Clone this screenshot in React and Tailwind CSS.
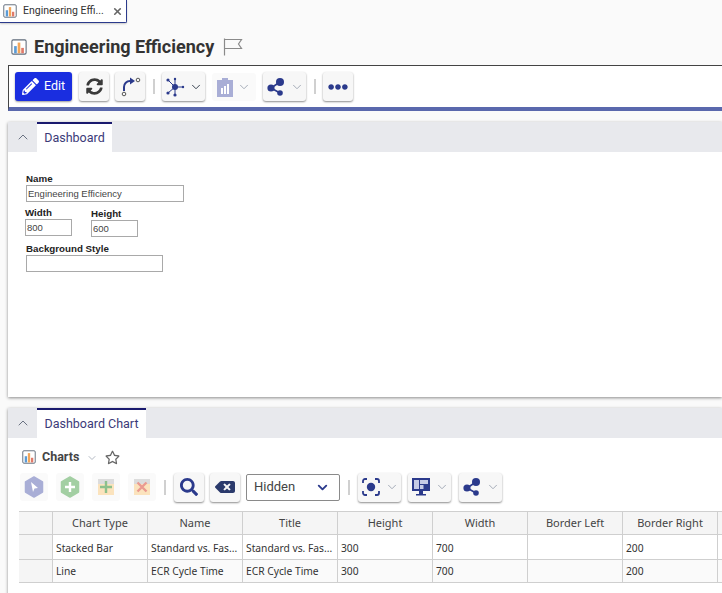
import { ChevronUp, ChevronDown, X } from 'lucide-react'
import { FaPencilAlt, FaSyncAlt, FaSearch, FaBackspace, FaEllipsisH, FaRegStar } from 'react-icons/fa'

const NAVY = '#2b3a8c'

const ChartIcon = ({ size = 18 }) => (
  <svg width={size} height={size} viewBox="0 0 18 18">
    <rect x="1" y="1" width="16" height="16" rx="1.5" fill="#fff" stroke="#5f6b7a" strokeWidth="1.2" />
    <rect x="3.5" y="8" width="3" height="8" fill="#5b9bd5" />
    <rect x="7.5" y="4" width="3" height="12" fill="#f2a65a" />
    <rect x="11.5" y="10" width="3" height="6" fill="#e07a6a" />
  </svg>
)

const FlagIcon = () => (
  <svg width="20" height="18" viewBox="0 0 20 18" fill="none" stroke="#8a8a8a" strokeWidth="1.2">
    <path d="M1.5 0.5 V17.5" />
    <path d="M1.5 1.5 H18.5 L15.5 6 L18.5 10.5 H1.5" />
  </svg>
)

const ShareIcon = () => (
  <svg width="20" height="20" viewBox="0 0 20 20" fill={NAVY}>
    <path d="M5 11 L14 5 M5 11 L14 16" stroke={NAVY} strokeWidth="1.6" />
    <circle cx="14" cy="5" r="4" />
    <circle cx="5" cy="11" r="3.6" />
    <circle cx="14" cy="16" r="2.8" />
  </svg>
)

const NetworkIcon = () => (
  <svg width="20" height="20" viewBox="0 0 20 20" fill={NAVY}>
    <path d="M10 10 L3 3 M10 10 L3 16 M10 10 L10 18 M10 10 L10 2 M10 10 L18 10" stroke={NAVY} strokeWidth="1" />
    <circle cx="10" cy="10" r="3" />
    <circle cx="3" cy="3" r="1.6" />
    <circle cx="3" cy="16" r="1.6" />
    <circle cx="10" cy="18" r="1.6" />
    <circle cx="10" cy="2" r="1.2" />
    <circle cx="18" cy="10" r="1.2" />
  </svg>
)

const RouteIcon = () => (
  <svg width="22" height="22" viewBox="0 0 22 22" fill="none">
    <path d="M5 15 V11 a6 6 0 0 1 6-6 h1" stroke={NAVY} strokeWidth="2" />
    <path d="M11 1.5 L16 5 L11 8.5 Z" fill={NAVY} />
    <circle cx="19" cy="4" r="1.8" stroke="#555" strokeWidth="1" />
    <circle cx="5" cy="18" r="1.8" stroke="#555" strokeWidth="1" />
  </svg>
)

const ClipboardIcon = () => (
  <svg width="16" height="20" viewBox="0 0 16 20" fill="#a9aed6">
    <path d="M0 3h5V1h6v2h5v17H0z" />
    <rect x="4" y="11" width="2" height="6" fill="#fff" />
    <rect x="7" y="9" width="2" height="8" fill="#fff" />
    <rect x="10" y="7" width="2" height="10" fill="#fff" />
  </svg>
)

const HexIcon = ({ fill, children }) => (
  <svg width="20" height="22" viewBox="0 0 20 22">
    <path d="M10 1 L18.5 6 V16 L10 21 L1.5 16 V6 Z" fill={fill} strokeLinejoin="round" stroke={fill} strokeWidth="1.5" />
    {children}
  </svg>
)

const GridEditIcon = ({ color }) => (
  <svg width="18" height="18" viewBox="0 0 18 18">
    <rect x="1" y="1" width="16" height="5" fill="#dcdcdc" />
    <rect x="1" y="6" width="16" height="11" fill="#fbe3bd" />
    {color === 'green' ? (
      <path d="M9 3 V15 M3 9 H15" stroke="#8cc08c" strokeWidth="2.4" />
    ) : (
      <path d="M4.5 4.5 L13.5 13.5 M13.5 4.5 L4.5 13.5" stroke="#ea9a90" strokeWidth="2.4" />
    )}
  </svg>
)

const TargetIcon = () => (
  <svg width="20" height="20" viewBox="0 0 20 20" fill="none" stroke={NAVY} strokeWidth="1.8">
    <path d="M2 6 V4 a2 2 0 0 1 2-2 h2 M14 2 h2 a2 2 0 0 1 2 2 v2 M18 14 v2 a2 2 0 0 1-2 2 h-2 M6 18 H4 a2 2 0 0 1-2-2 v-2" />
    <circle cx="10" cy="10" r="4.2" fill={NAVY} stroke="none" />
  </svg>
)

const MonitorIcon = () => (
  <svg width="20" height="20" viewBox="0 0 20 20" fill={NAVY}>
    <path d="M1 1h18v13H1z" />
    <rect x="3" y="3" width="5" height="9" fill="#c5cae6" />
    <rect x="9" y="3" width="8" height="4" fill="#c5cae6" />
    <rect x="9" y="8" width="3.5" height="4" fill="#c5cae6" />
    <path d="M8 14h4v3h3v1.5H5V17h3z" />
  </svg>
)

const IconBtn = ({ children, className = 'w-[30px]' }) => (
  <button className={`h-[29px] ${className} flex items-center justify-center gap-1 bg-[#f7f7f7] rounded-[3px] shadow-[0_1px_2px_rgba(0,0,0,0.45)]`}>
    {children}
  </button>
)

const Caret = ({ light }) => (
  <ChevronDown className={`w-3.5 h-3.5 ${light ? 'text-gray-400' : 'text-gray-800'}`} strokeWidth={1.5} />
)

const Sep = ({ className = '' }) => <div className={`w-[2px] h-[15px] bg-[#d0d0d0] ${className}`} />

const Ghost = ({ children, className = 'w-[28px]' }) => (
  <div className={`h-[28px] ${className} flex items-center justify-center gap-1 bg-[#fafafa] rounded-[3px]`}>{children}</div>
)

function PanelHeader({ label, width }) {
  return (
    <div className="h-[30px] bg-[#e8e9ed] flex">
      <div className="w-[29px] flex items-center justify-center">
        <ChevronUp className="w-4 h-4 text-gray-500" strokeWidth={1.5} />
      </div>
      <div className={`${width} bg-white border-t-2 border-[#1a1a6e] flex items-center justify-center text-[12.5px] text-[#3b3a78]`}>
        {label}
      </div>
    </div>
  )
}

const columns = ['Chart Type', 'Name', 'Title', 'Height', 'Width', 'Border Left', 'Border Right', '']
const rows = [
  ['Stacked Bar', 'Standard vs. Fas...', 'Standard vs. Fas...', '300', '700', '', '200', ''],
  ['Line', 'ECR Cycle Time', 'ECR Cycle Time', '300', '700', '', '200', ''],
]
const colWidths = ['w-[95px]', 'w-[95px]', 'w-[95px]', 'w-[95px]', 'w-[95px]', 'w-[95px]', 'w-[95px]', 'w-[40px]']

function Field({ label, className, inputClass, value }) {
  return (
    <div className={className}>
      <div className="text-[9.75px] leading-[12px] font-bold text-[#222]">{label}</div>
      <div className={`${inputClass} h-[17px] border border-[#a9a9a9] bg-white px-[1px] text-[9.5px] leading-[15px] text-[#444]`}>{value}</div>
    </div>
  )
}

export default function App() {
  return (
    <div className="w-[722px] h-[593px] overflow-hidden bg-[#fafafa] font-['Roboto',sans-serif]">
      {/* Document tab */}
      <div className="w-[127px] h-[23px] bg-white border-b border-r border-[#2b3a8c] rounded-br-[2px] shadow-[0_1px_2px_rgba(0,0,0,0.2)] flex items-center pl-[3px]">
        <ChartIcon size={14} />
        <span className="ml-[6px] text-[10.5px] text-[#333] whitespace-nowrap">Engineering Effi...</span>
        <X className="ml-[8px] w-[11px] h-[11px] text-[#666]" strokeWidth={3.5} />
      </div>

      {/* Title */}
      <div className="h-[42px] pl-[11px] pt-[6px] flex items-center gap-[7px]">
        <ChartIcon size={16} />
        <h1 className="text-[18px] font-bold text-[#333] leading-none">Engineering Efficiency</h1>
        <div className="ml-[2px]"><FlagIcon /></div>
      </div>

      {/* Main toolbar */}
      <div className="ml-2 h-[46px] bg-white border-t border-l border-[#444] border-b-[4px] border-b-[#5a68ad] flex items-center pl-[6px]">
        <button className="w-[57px] h-[29px] rounded-[3px] bg-[#1a2ee0] text-white flex items-center justify-center gap-[5px] text-[12.5px] shadow-[0_1px_2px_rgba(0,0,0,0.4)]">
          <FaPencilAlt className="w-[17px] h-[17px]" />
          Edit
        </button>
        <div className="ml-[7px]"><IconBtn><FaSyncAlt className="w-[17px] h-[17px] text-[#3a3a3a]" /></IconBtn></div>
        <div className="ml-[6px]"><IconBtn><RouteIcon /></IconBtn></div>
        <Sep className="ml-[8px]" />
        <div className="ml-[7px]"><IconBtn className="w-[43px]"><NetworkIcon /><Caret /></IconBtn></div>
        <Ghost className="w-[44px] ml-[7px]"><ClipboardIcon /><Caret light /></Ghost>
        <div className="ml-[7px]"><IconBtn className="w-[43px]"><ShareIcon /><Caret light /></IconBtn></div>
        <Sep className="ml-[8px]" />
        <div className="ml-[7px]"><IconBtn><FaEllipsisH className="w-[20px] h-[20px] text-[#2b3a8c]" /></IconBtn></div>
      </div>

      {/* Dashboard panel */}
      <section className="ml-2 mt-[11px] h-[275px] bg-white shadow-[0_1px_3px_rgba(0,0,0,0.45)] font-['Liberation_Sans',sans-serif]">
        <div className="font-['Roboto',sans-serif]"><PanelHeader label="Dashboard" width="w-[75px]" /></div>
        <div className="pl-[18px] pt-[21px]">
          <Field label="Name" inputClass="w-[158px]" value="Engineering Efficiency" />
          <div className="flex mt-[5px]">
            <Field label="Width" className="-ml-px" inputClass="w-[47px]" value="800" />
            <Field label="Height" className="ml-[19px] mt-[1px]" inputClass="w-[47px]" value="600" />
          </div>
          <Field label="Background Style" className="mt-[6px]" inputClass="w-[137px]" value="" />
        </div>
      </section>

      {/* Dashboard chart panel */}
      <section className="ml-2 mt-[11px] h-[200px] bg-white shadow-[0_1px_3px_rgba(0,0,0,0.45)]">
        <PanelHeader label="Dashboard Chart" width="w-[109px]" />
        <div className="pl-[14px] pt-[7px] h-[31px] flex items-center">
          <ChartIcon size={14} />
          <span className="ml-[6px] text-[12.5px] font-bold text-[#444]">Charts</span>
          <ChevronDown className="ml-[7px] mt-[2px] w-3 h-3 text-gray-400" strokeWidth={1.5} />
          <FaRegStar className="ml-[7px] w-[15px] h-[15px] text-[#666]" />
        </div>
        <div className="pl-[12px] mt-[3px] flex items-center h-[30px]">
          <Ghost><HexIcon fill="#a9aed6"><path d="M7 6 L14 12 L10.5 12.5 L9 16 Z" fill="#fff" /></HexIcon></Ghost>
          <Ghost className="w-[28px] ml-[8px]"><HexIcon fill="#a3cfa3"><path d="M10 6 V16 M5 11 H15" stroke="#fff" strokeWidth="2.4" /></HexIcon></Ghost>
          <Ghost className="w-[28px] ml-[8px]"><GridEditIcon color="green" /></Ghost>
          <Ghost className="w-[28px] ml-[8px]"><GridEditIcon color="red" /></Ghost>
          <Sep className="ml-[8px]" />
          <div className="ml-[8px]"><IconBtn><FaSearch className="w-[18px] h-[18px] text-[#2b3a8c]" /></IconBtn></div>
          <div className="ml-[6px]"><IconBtn><FaBackspace className="w-[20px] h-[20px] text-[#2b3a6c]" /></IconBtn></div>
          <div className="ml-[6px] w-[94px] h-[27px] border border-[#8a8a8a] rounded-[2px] bg-white flex items-center justify-between pl-[7px] pr-[9px] text-[13px] text-[#444]">
            Hidden
            <ChevronDown className="w-[15px] h-[15px] text-[#2b3a8c]" strokeWidth={3} />
          </div>
          <Sep className="ml-[8px]" />
          <div className="ml-[8px]"><IconBtn className="w-[43px]"><TargetIcon /><Caret light /></IconBtn></div>
          <div className="ml-[7px]"><IconBtn className="w-[43px]"><MonitorIcon /><Caret light /></IconBtn></div>
          <div className="ml-[8px]"><IconBtn className="w-[43px]"><ShareIcon /><Caret light /></IconBtn></div>
        </div>

        <div className="ml-[11px] mt-[9px] font-['Noto_Sans',sans-serif]">
          <div className="flex h-[24px] bg-[#f5f5f5] border-t border-b border-[#cfcfcf] text-[11px] text-[#444]">
            <div className="w-[34px] shrink-0 border-r border-[#cfcfcf]" />
            {columns.map((c, i) => (
              <div key={i} className={`${colWidths[i]} shrink-0 border-r border-[#cfcfcf] flex items-center justify-center whitespace-nowrap`}>{c}</div>
            ))}
          </div>
          {rows.map((r, ri) => (
            <div key={ri} className={`flex border-b border-[#cfcfcf] text-[10.25px] text-[#333] ${ri === 1 ? 'h-[23px] bg-[#fafafa]' : 'h-[25px] bg-white'}`}>
              <div className="w-[34px] shrink-0 bg-[#f5f5f5] border-r border-[#cfcfcf]" />
              {r.map((v, i) => (
                <div key={i} className={`${colWidths[i]} shrink-0 border-r border-[#cfcfcf] flex items-center pl-[3px] whitespace-nowrap overflow-hidden ${ri === 0 ? 'pt-[3px]' : 'pt-[2px]'}`}>{v}</div>
              ))}
            </div>
          ))}
        </div>
      </section>
    </div>
  )
}
